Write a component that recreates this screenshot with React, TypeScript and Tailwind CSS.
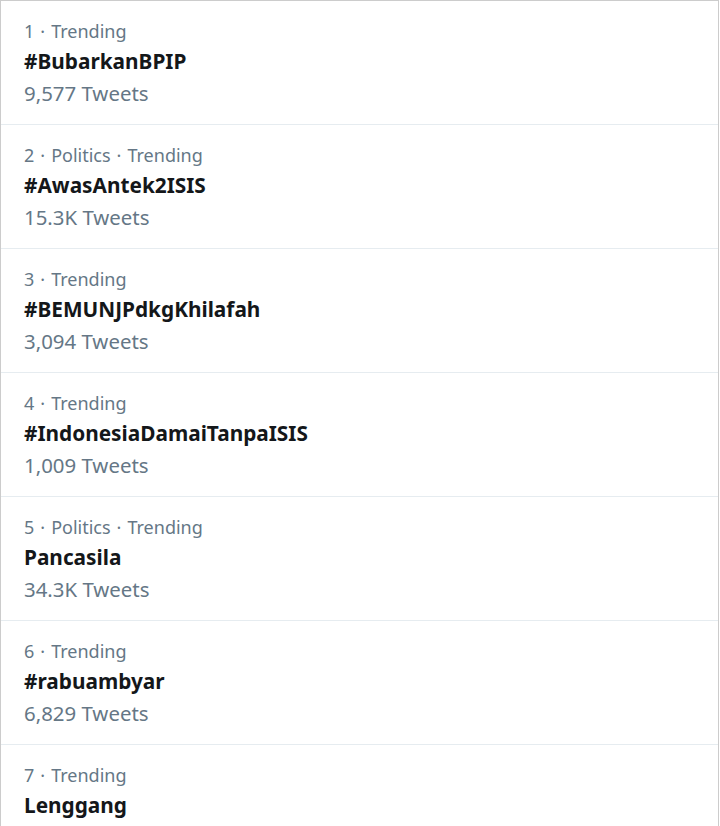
const trends = [
  { rank: 1, category: '', name: '#BubarkanBPIP', count: '9,577 Tweets' },
  { rank: 2, category: 'Politics', name: '#AwasAntek2ISIS', count: '15.3K Tweets' },
  { rank: 3, category: '', name: '#BEMUNJPdkgKhilafah', count: '3,094 Tweets' },
  { rank: 4, category: '', name: '#IndonesiaDamaiTanpaISIS', count: '1,009 Tweets' },
  { rank: 5, category: 'Politics', name: 'Pancasila', count: '34.3K Tweets' },
  { rank: 6, category: '', name: '#rabuambyar', count: '6,829 Tweets' },
  { rank: 7, category: '', name: 'Lenggang', count: '' },
]

const Dot = () => <span className="px-[6px]">·</span>

const TrendRow = ({ rank, category, name, count }: (typeof trends)[number]) => (
  <div className="border-b border-[#e6ecf0] pl-[23px] pt-[16px] pb-[15px]">
    <p className="h-[28px] text-[18px] leading-[28px] text-[#657786]">
      {rank}
      <Dot />
      {category ? (
        <>
          {category}
          <Dot />
        </>
      ) : null}
      Trending
    </p>
    <p className="h-[32px] text-[20.8px] font-bold leading-[32px] text-[#14171a]">{name}</p>
    <p className="h-[32px] text-[20.4px] leading-[32px] text-[#657786]">{count}</p>
  </div>
)

export default function App() {
  return (
    <div className="h-[826px] w-[720px] overflow-hidden bg-white" style={{ fontFamily: '"Noto Sans", "Open Sans", sans-serif' }}>
      <div className="w-[719px] border-l border-r border-t border-[#cccccc]">
        {trends.map((t) => (
          <TrendRow key={t.rank} {...t} />
        ))}
      </div>
    </div>
  )
}
